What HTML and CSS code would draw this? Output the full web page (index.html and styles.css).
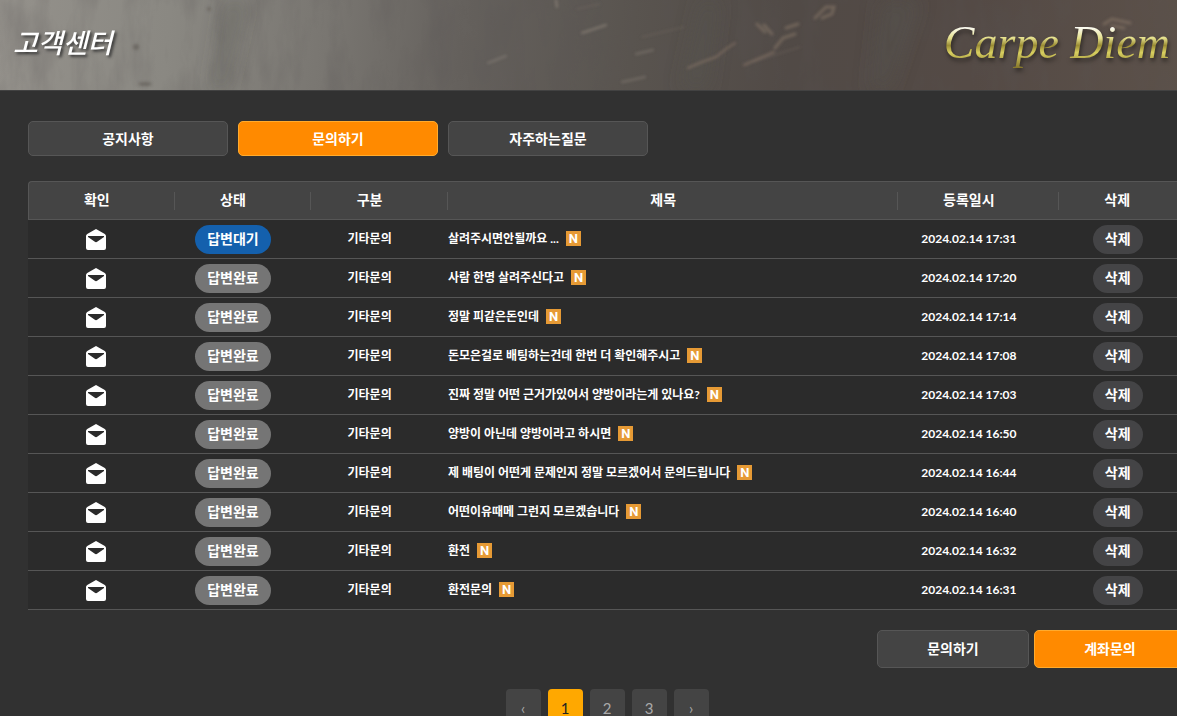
FILE: index.html
```html
<!DOCTYPE html>
<html lang="ko">
<head>
<meta charset="utf-8">
<title>고객센터</title>
<link rel="stylesheet" href="styles.css">
</head>
<body>
<svg class="defs" aria-hidden="true">
  <symbol id="mail" viewBox="0 0 20 21">
    <path fill-rule="evenodd" d="M10 0 18.800 5Q20 5.800 20 7V19Q20 21 18 21H2Q0 21 0 19V7Q0 5.800 1.200 5ZM2 7V8L8.500 12.600Q10 13.700 11.500 12.600L18 8V7Z"/>
  </symbol>
</svg>
<div class="page">
  <header class="banner">
    <svg class="texture" viewBox="0 0 1214 90" preserveAspectRatio="none" aria-hidden="true">
      <defs>
        <filter id="grain" x="0" y="0" width="100%" height="100%">
          <feTurbulence type="fractalNoise" baseFrequency="0.04 0.012" numOctaves="5" seed="8"/>
          <feColorMatrix values="0 0 0 0 0.1  0 0 0 0 0.09  0 0 0 0 0.09  1.6 0 0 0 -0.65"/>
        </filter>
        <filter id="soft"><feGaussianBlur stdDeviation="1.4"/></filter>
        <filter id="wide"><feGaussianBlur stdDeviation="9"/></filter>
      </defs>
      <rect width="1214" height="90" filter="url(#grain)" opacity="0.35"/>
      <g filter="url(#wide)" fill="#55534d">
        <path d="M225 0h22l-20 90h-16Z" opacity="0.35"/>
        <path d="M700 0h20l-12 90h-28Z" opacity="0.35"/>
        <path d="M880 0h40l-30 90h-20Z" opacity="0.35"/>
      </g>
      <g filter="url(#soft)" fill="none" stroke="#a59a8e" stroke-linecap="round">
        <path d="M582 33 606 25" stroke-width="2" opacity="0.5"/>
        <path d="M636 54 653 50M622 82 645 77M488 63 506 56" stroke-width="2" opacity="0.35"/>
        <path d="M688 68 702 62 716 57 726 49 735 43M744 65 774 52" stroke="#9b8372" stroke-width="2" opacity="0.5"/>
        <path d="M757 24 765 32 M764 25 772 34M775 48 783 38 795 34M786 28 798 24M815 18 826 7 834 7 832 14 822 18M1104 24 1112 19 1130 23M1112 26 1124 28" stroke="#a08b79" stroke-width="3" opacity="0.4"/>
        <path d="M556 0 557 7" stroke-width="2" opacity="0.5"/>
        <path d="M577 9 600 4M642 37 684 27M752 62 800 47" stroke="#8d7d72" opacity="0.4"/>
      </g>
      <g filter="url(#soft)" fill="#55504a" opacity="0.5">
        <ellipse cx="136" cy="47" rx="3" ry="3"/>
        <ellipse cx="145" cy="84" rx="7" ry="2"/>
        <ellipse cx="209" cy="9" rx="2" ry="2"/>
      </g>
    </svg>
    <h1 class="banner-title">고객센터</h1>
    <div class="brand">Carpe Diem</div>
  </header>

  <main class="content">
    <nav class="tabs">
      <button class="btn tab" type="button">공지사항</button>
      <button class="btn tab btn-active" type="button">문의하기</button>
      <button class="btn tab" type="button">자주하는질문</button>
    </nav>

    <table class="board">
      <colgroup><col class="c-small"><col class="c-small"><col class="c-small"><col><col class="c-date"><col class="c-small"></colgroup>
      <thead>
        <tr><th>확인</th><th>상태</th><th>구분</th><th>제목</th><th>등록일시</th><th>삭제</th></tr>
      </thead>
      <tbody>
        <tr><td><svg class="mail"><use href="#mail"/></svg></td><td><span class="pill pill-wait">답변대기</span></td><td>기타문의</td><td class="subject"><a href="#">살려주시면안될까요 ...</a><span class="new">N</span></td><td>2024.02.14 17:31</td><td><button class="pill pill-del" type="button">삭제</button></td></tr>
        <tr><td><svg class="mail"><use href="#mail"/></svg></td><td><span class="pill">답변완료</span></td><td>기타문의</td><td class="subject"><a href="#">사람 한명 살려주신다고</a><span class="new">N</span></td><td>2024.02.14 17:20</td><td><button class="pill pill-del" type="button">삭제</button></td></tr>
        <tr><td><svg class="mail"><use href="#mail"/></svg></td><td><span class="pill">답변완료</span></td><td>기타문의</td><td class="subject"><a href="#">정말 피같은돈인데</a><span class="new">N</span></td><td>2024.02.14 17:14</td><td><button class="pill pill-del" type="button">삭제</button></td></tr>
        <tr><td><svg class="mail"><use href="#mail"/></svg></td><td><span class="pill">답변완료</span></td><td>기타문의</td><td class="subject"><a href="#">돈모은걸로 배팅하는건데 한번 더 확인해주시고</a><span class="new">N</span></td><td>2024.02.14 17:08</td><td><button class="pill pill-del" type="button">삭제</button></td></tr>
        <tr><td><svg class="mail"><use href="#mail"/></svg></td><td><span class="pill">답변완료</span></td><td>기타문의</td><td class="subject"><a href="#">진짜 정말 어떤 근거가있어서 양방이라는게 있나요?</a><span class="new">N</span></td><td>2024.02.14 17:03</td><td><button class="pill pill-del" type="button">삭제</button></td></tr>
        <tr><td><svg class="mail"><use href="#mail"/></svg></td><td><span class="pill">답변완료</span></td><td>기타문의</td><td class="subject"><a href="#">양방이 아닌데 양방이라고 하시면</a><span class="new">N</span></td><td>2024.02.14 16:50</td><td><button class="pill pill-del" type="button">삭제</button></td></tr>
        <tr><td><svg class="mail"><use href="#mail"/></svg></td><td><span class="pill">답변완료</span></td><td>기타문의</td><td class="subject"><a href="#">제 배팅이 어떤게 문제인지 정말 모르겠어서 문의드립니다</a><span class="new">N</span></td><td>2024.02.14 16:44</td><td><button class="pill pill-del" type="button">삭제</button></td></tr>
        <tr><td><svg class="mail"><use href="#mail"/></svg></td><td><span class="pill">답변완료</span></td><td>기타문의</td><td class="subject"><a href="#">어떤이유때메 그런지 모르겠습니다</a><span class="new">N</span></td><td>2024.02.14 16:40</td><td><button class="pill pill-del" type="button">삭제</button></td></tr>
        <tr><td><svg class="mail"><use href="#mail"/></svg></td><td><span class="pill">답변완료</span></td><td>기타문의</td><td class="subject"><a href="#">환전</a><span class="new">N</span></td><td>2024.02.14 16:32</td><td><button class="pill pill-del" type="button">삭제</button></td></tr>
        <tr><td><svg class="mail"><use href="#mail"/></svg></td><td><span class="pill">답변완료</span></td><td>기타문의</td><td class="subject"><a href="#">환전문의</a><span class="new">N</span></td><td>2024.02.14 16:31</td><td><button class="pill pill-del" type="button">삭제</button></td></tr>
      </tbody>
    </table>

    <div class="actions">
      <button class="btn action" type="button">문의하기</button>
      <button class="btn action btn-active" type="button">계좌문의</button>
    </div>

    <nav class="pager">
      <a href="#">‹</a>
      <a href="#" class="current">1</a>
      <a href="#">2</a>
      <a href="#">3</a>
      <a href="#">›</a>
    </nav>
  </main>
</div>
</body>
</html>
```
FILE: styles.css
```css
* { box-sizing: border-box; }

body {
  margin: 0;
  overflow: hidden;
  background: #313131;
  color: #fff;
  font-family: Lato, "Noto Sans CJK KR", sans-serif;
  font-size: 12px;
  font-weight: 700;
}

a { color: inherit; text-decoration: none; }
button { font: inherit; color: inherit; cursor: pointer; }
.defs { display: none; }

/* The board keeps a minimum width and runs off narrow windows */
.page { min-width: 1214px; }

.banner {
  position: relative;
  display: flex;
  align-items: center;
  justify-content: space-between;
  height: 91px;
  padding: 0 40px 4px 13px;
  border-bottom: 1px solid #424242;
  background: linear-gradient(95deg, #94918b 0%, #8a8882 14%, #797671 27%, #65615d 38%, #59544f 52%, #514a46 65%, #544a45 80%, #5d524a 100%);
}

.texture {
  position: absolute;
  inset: 0;
  width: 100%;
  height: 100%;
}

.banner-title {
  position: relative;
  margin: 0;
  font-size: 27px;
  font-style: italic;
  font-weight: 500;
  line-height: 38px;
  text-shadow: 2px 2px 3px #333;
}

.brand {
  position: relative;
  padding: 0 4px;
  font-family: "Liberation Serif", serif;
  font-size: 46px;
  font-style: italic;
  font-weight: 400;
  line-height: 60px;
  color: transparent;
  background: linear-gradient(#fff 22%, #e4df8a 42%, #9a8c34 54%, #d8cf60 66%, #7a6a24 95%);
  background-clip: text;
  filter: drop-shadow(1px 3px 2px #2b2622);
}

.content { padding: 30px 28px; }

.tabs { display: flex; gap: 10px; }

.btn {
  border: 1px solid #565656;
  border-radius: 5px;
  background: #444;
  padding: 0 0 2px;
  font-size: 14px;
}

.btn-active { background: #ff8a00; border-color: #ffab2e; }
.tab { width: 200px; height: 35px; }

.board {
  width: 100%;
  margin-top: 25px;
  border-spacing: 0;
  table-layout: fixed;
  text-align: center;
}

.c-small { width: 11.8%; }
.c-date { width: 13.9%; }

.board th {
  position: relative;
  height: 39px;
  padding: 0 0 2px;
  border: solid #565656;
  border-width: 1px 0;
  background: #444;
  font-size: 14px;
  line-height: 20px;
}

.board th:first-child { border-left-width: 1px; border-top-left-radius: 4px; }
.board th:last-child { border-right-width: 1px; border-top-right-radius: 4px; }

.board th:not(:last-child)::after {
  content: "";
  position: absolute;
  z-index: 1;
  top: 10px;
  right: -10px;
  width: 1px;
  height: 18px;
  background: #565656;
}

.board td {
  height: 39px;
  padding: 0;
  border-bottom: 1px solid #565656;
  background: #2b2b2b;
  line-height: 18px;
}

.board .subject { padding-left: 10px; text-align: left; }

.mail {
  display: block;
  width: 20px;
  height: 21px;
  margin: 0 auto;
  fill: #fff;
}

.pill {
  display: inline-block;
  height: 29px;
  padding: 0 12px;
  border: 0;
  border-radius: 15px;
  background: #757575;
  font-size: 14px;
  line-height: 28px;
  vertical-align: middle;
}

.pill-wait { background: #1460ad; }
.pill-del { background: #444446; }

.new {
  display: inline-block;
  width: 15px;
  height: 15px;
  margin-left: 7px;
  background: #e69a35;
  font-family: Roboto, sans-serif;
  font-size: 13px;
  line-height: 15px;
  text-align: center;
}

.actions {
  display: flex;
  justify-content: flex-end;
  gap: 5px;
  margin-top: 20px;
}

.action { width: 152px; height: 38px; }

.pager {
  display: flex;
  justify-content: center;
  gap: 7px;
  margin-top: 21px;
}

.pager a {
  width: 35px;
  height: 38px;
  border-radius: 4px;
  background: #444;
  color: #aaa;
  font-size: 15px;
  font-weight: 400;
  line-height: 38px;
  text-align: center;
}

.pager .current { background: #ffa800; color: #222; }
```
